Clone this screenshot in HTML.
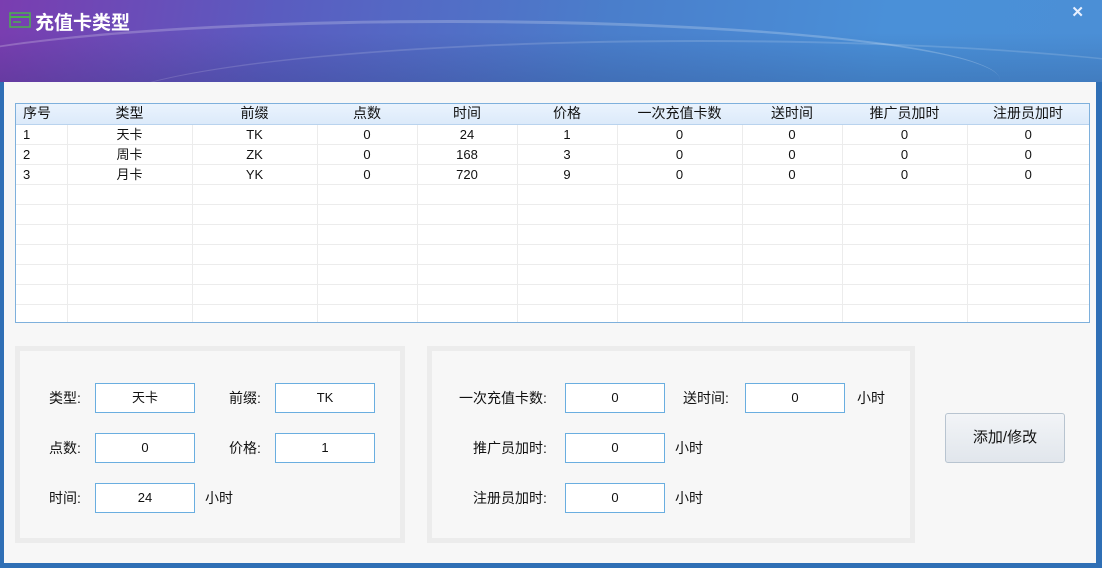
<!DOCTYPE html><html><head><meta charset="utf-8"><style>
*{margin:0;padding:0;box-sizing:border-box}
body{width:1102px;height:568px;overflow:hidden;background:#2f6fb5;font-family:"Liberation Sans","Noto Sans CJK SC",sans-serif;font-size:14px;color:#111;position:relative}
.title{position:absolute;left:0;top:0;width:1102px;height:82px;background:linear-gradient(180deg,rgba(0,0,0,0) 40%,rgba(20,40,90,.18) 100%),linear-gradient(100deg,#7a3db0 0%,#5a5cc0 25%,#4a7ecb 55%,#4a90d8 80%,#4b8fd6 100%);overflow:hidden}
.title .sw{position:absolute;left:-100px;top:20px;width:1100px;height:120px;border-radius:50%;border-top:3px solid rgba(255,255,255,.22)}
.title .sw2{position:absolute;left:100px;top:40px;width:1200px;height:140px;border-radius:50%;border-top:2px solid rgba(255,255,255,.15)}
.tt{position:absolute;left:35px;top:8px;color:#fff;font-size:19px;font-weight:bold}
.x{position:absolute;right:18px;top:3px;color:#e8f0ff;font-size:15px;font-weight:bold}
.body{position:absolute;left:4px;top:82px;width:1092px;height:481px;background:#f7f7f7}
.abs{position:absolute}
.tw{position:absolute;left:15px;top:103px;width:1075px;height:220px;border:1px solid #7eb0dc;background:#fff;overflow:hidden}
table{width:1073px;border-collapse:collapse;font-size:13px;table-layout:fixed}
td{border-right:1px solid #ececec;border-bottom:1px solid #ececec;height:20px;text-align:center;padding:0;line-height:19px}
td:last-child{border-right:none}
tr.h td{background:linear-gradient(#eaf3fd,#dceafa);border-bottom:1px solid #b9d3ee;border-right:none;font-size:14px}
td.l{text-align:left;padding-left:7px}
.grp{position:absolute;border:5px solid #ececec;background:#f7f7f7}
.in{position:absolute;width:100px;height:30px;border:1px solid #6aaee0;background:#fff;text-align:center;line-height:28px;font-size:13px}
.lb{position:absolute;white-space:nowrap;line-height:30px}
.btn{position:absolute;left:945px;top:413px;width:120px;height:50px;border:1px solid #b8c4d0;border-radius:3px;background:linear-gradient(#f2f4f7,#e1e6ec);text-align:center;line-height:48px;font-size:15px}
</style></head><body>
<div class="title"><div class="sw"></div><div class="sw2"></div>
<svg class="abs" style="left:9px;top:12px" width="22" height="16"><rect x="1" y="1" width="20" height="14" fill="none" stroke="#4caf50" stroke-width="1.5"/><line x1="1" y1="5" x2="21" y2="5" stroke="#4caf50" stroke-width="2"/><line x1="4" y1="10" x2="12" y2="10" stroke="#4caf50" stroke-width="1.5"/></svg>
<div class="tt">充值卡类型</div><div class="x">✕</div></div>
<div class="body"></div>
<div class="tw"><table>
<colgroup><col style="width:51px"><col style="width:125px"><col style="width:125px"><col style="width:100px"><col style="width:100px"><col style="width:100px"><col style="width:125px"><col style="width:100px"><col style="width:125px"><col></colgroup>
<tr class="h"><td class="l">序号</td><td>类型</td><td>前缀</td><td>点数</td><td>时间</td><td>价格</td><td>一次充值卡数</td><td>送时间</td><td>推广员加时</td><td>注册员加时</td></tr>
<tr><td class="l">1</td><td>天卡</td><td>TK</td><td>0</td><td>24</td><td>1</td><td>0</td><td>0</td><td>0</td><td>0</td></tr>
<tr><td class="l">2</td><td>周卡</td><td>ZK</td><td>0</td><td>168</td><td>3</td><td>0</td><td>0</td><td>0</td><td>0</td></tr>
<tr><td class="l">3</td><td>月卡</td><td>YK</td><td>0</td><td>720</td><td>9</td><td>0</td><td>0</td><td>0</td><td>0</td></tr>
<tr><td></td><td></td><td></td><td></td><td></td><td></td><td></td><td></td><td></td><td></td></tr>
<tr><td></td><td></td><td></td><td></td><td></td><td></td><td></td><td></td><td></td><td></td></tr>
<tr><td></td><td></td><td></td><td></td><td></td><td></td><td></td><td></td><td></td><td></td></tr>
<tr><td></td><td></td><td></td><td></td><td></td><td></td><td></td><td></td><td></td><td></td></tr>
<tr><td></td><td></td><td></td><td></td><td></td><td></td><td></td><td></td><td></td><td></td></tr>
<tr><td></td><td></td><td></td><td></td><td></td><td></td><td></td><td></td><td></td><td></td></tr>
<tr><td></td><td></td><td></td><td></td><td></td><td></td><td></td><td></td><td></td><td></td></tr>
</table></div>
<div class="grp" style="left:15px;top:346px;width:390px;height:197px"></div>
<div class="grp" style="left:427px;top:346px;width:488px;height:197px"></div>
<div class="lb" style="left:49px;top:383px">类型:</div><div class="in" style="left:95px;top:383px">天卡</div>
<div class="lb" style="left:229px;top:383px">前缀:</div><div class="in" style="left:275px;top:383px">TK</div>
<div class="lb" style="left:49px;top:433px">点数:</div><div class="in" style="left:95px;top:433px">0</div>
<div class="lb" style="left:229px;top:433px">价格:</div><div class="in" style="left:275px;top:433px">1</div>
<div class="lb" style="left:49px;top:483px">时间:</div><div class="in" style="left:95px;top:483px">24</div>
<div class="lb" style="left:205px;top:483px">小时</div>
<div class="lb" style="left:459px;top:383px">一次充值卡数:</div><div class="in" style="left:565px;top:383px">0</div>
<div class="lb" style="left:683px;top:383px">送时间:</div><div class="in" style="left:745px;top:383px">0</div>
<div class="lb" style="left:857px;top:383px">小时</div>
<div class="lb" style="left:473px;top:433px">推广员加时:</div><div class="in" style="left:565px;top:433px">0</div>
<div class="lb" style="left:675px;top:433px">小时</div>
<div class="lb" style="left:473px;top:483px">注册员加时:</div><div class="in" style="left:565px;top:483px">0</div>
<div class="lb" style="left:675px;top:483px">小时</div>
<div class="btn">添加/修改</div>
</body></html>
